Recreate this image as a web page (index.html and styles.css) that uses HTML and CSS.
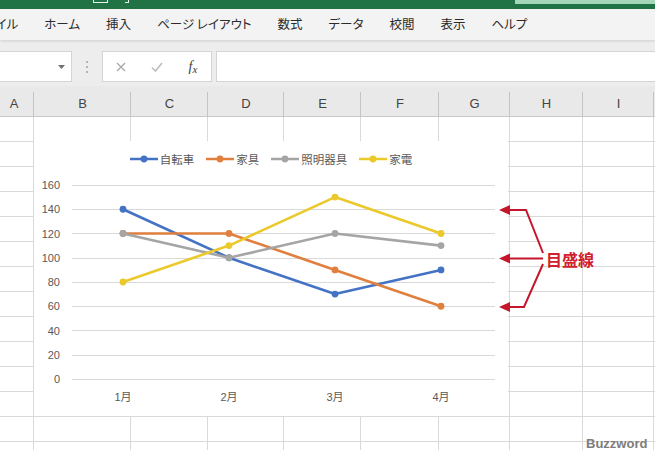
FILE: index.html
```html
<!DOCTYPE html>
<html lang="ja">
<head>
<meta charset="utf-8">
<title>Excel 目盛線</title>
<link rel="stylesheet" href="styles.css">
</head>
<body>
<div class="app">
  <div class="titlebar">
    <span class="qa qa-save"></span>
    <span class="qa qa-undo"></span>
    <span class="search"></span>
  </div>

  <nav class="menubar">
    <span class="menu-first">ファイル</span>
    <span>ホーム</span>
    <span>挿入</span>
    <span>ページ レイアウト</span>
    <span>数式</span>
    <span>データ</span>
    <span>校閲</span>
    <span>表示</span>
    <span>ヘルプ</span>
  </nav>

  <div class="formulabar">
    <div class="namebox">
      <svg class="dd" width="7" height="4" viewBox="0 0 7 4"><path d="M0 0H7L3.5 4Z"/></svg>
    </div>
    <div class="grip">
      <svg width="2" height="12" viewBox="0 0 2 12"><rect x="0" y="0" width="2" height="2"/><rect x="0" y="5" width="2" height="2"/><rect x="0" y="10" width="2" height="2"/></svg>
    </div>
    <div class="fbtns">
      <span class="fbtn"><svg width="10" height="10" viewBox="0 0 10 10"><path d="M1 1L9 9M9 1L1 9" class="xs"/></svg></span>
      <span class="fbtn"><svg width="12" height="10" viewBox="0 0 12 10"><path d="M1 5.5L4.5 9L11 1" class="ck"/></svg></span>
      <span class="fbtn fx"><i>f</i><i class="fxx">x</i></span>
    </div>
    <div class="finput"></div>
  </div>

  <div class="colheads">
    <div class="ch c-a">A</div>
    <div class="ch c-b">B</div>
    <div class="ch c-c">C</div>
    <div class="ch c-d">D</div>
    <div class="ch c-e">E</div>
    <div class="ch c-f">F</div>
    <div class="ch c-g">G</div>
    <div class="ch c-h">H</div>
    <div class="ch c-i">I</div>
    <div class="ch c-j"></div>
  </div>

  <div class="sheet">
    <div class="col c-a"></div>
    <div class="col c-b"></div>
    <div class="col c-c"></div>
    <div class="col c-d"></div>
    <div class="col c-e"></div>
    <div class="col c-f"></div>
    <div class="col c-g"></div>
    <div class="col c-h"></div>
    <div class="col c-i"></div>
    <div class="col c-j"></div>
  </div>

  <div class="chart">
    <svg class="plot" width="474" height="275" viewBox="34 141 474 275">
      <g class="grid">
        <line x1="72" x2="495" y1="185.5" y2="185.5"/>
        <line x1="72" x2="495" y1="209.5" y2="209.5"/>
        <line x1="72" x2="495" y1="233.5" y2="233.5"/>
        <line x1="72" x2="495" y1="258.5" y2="258.5"/>
        <line x1="72" x2="495" y1="282.5" y2="282.5"/>
        <line x1="72" x2="495" y1="306.5" y2="306.5"/>
        <line x1="72" x2="495" y1="330.5" y2="330.5"/>
        <line x1="72" x2="495" y1="355.5" y2="355.5"/>
        <line x1="72" x2="495" y1="379.5" y2="379.5"/>
      </g>
      <g class="ylab">
        <text x="60" y="185">160</text>
        <text x="60" y="209">140</text>
        <text x="60" y="234">120</text>
        <text x="60" y="258">100</text>
        <text x="60" y="282">80</text>
        <text x="60" y="306">60</text>
        <text x="60" y="331">40</text>
        <text x="60" y="355">20</text>
        <text x="60" y="379">0</text>
      </g>
      <g class="xlab">
        <text x="123" y="397">1月</text>
        <text x="229" y="397">2月</text>
        <text x="335" y="397">3月</text>
        <text x="441" y="397">4月</text>
      </g>
      <g class="s s1">
        <polyline points="123,209.25 229,257.75 335,294.1 441,269.9"/>
        <circle cx="123" cy="209.25" r="3.4"/><circle cx="229" cy="257.75" r="3.4"/><circle cx="335" cy="294.1" r="3.4"/><circle cx="441" cy="269.9" r="3.4"/>
      </g>
      <g class="s s2">
        <polyline points="123,233.5 229,233.5 335,269.9 441,306.25"/>
        <circle cx="123" cy="233.5" r="3.4"/><circle cx="229" cy="233.5" r="3.4"/><circle cx="335" cy="269.9" r="3.4"/><circle cx="441" cy="306.25" r="3.4"/>
      </g>
      <g class="s s3">
        <polyline points="123,233.5 229,257.75 335,233.5 441,245.6"/>
        <circle cx="123" cy="233.5" r="3.4"/><circle cx="229" cy="257.75" r="3.4"/><circle cx="335" cy="233.5" r="3.4"/><circle cx="441" cy="245.6" r="3.4"/>
      </g>
      <g class="s s4">
        <polyline points="123,282 229,245.6 335,197.1 441,233.5"/>
        <circle cx="123" cy="282" r="3.4"/><circle cx="229" cy="245.6" r="3.4"/><circle cx="335" cy="197.1" r="3.4"/><circle cx="441" cy="233.5" r="3.4"/>
      </g>
    </svg>

    <div class="legend">
      <div class="lg-item">
        <svg class="sw s1" width="28" height="8" viewBox="0 0 28 8"><line x1="0" x2="28" y1="4" y2="4"/><circle cx="14" cy="4" r="3.4"/></svg>
        <span>自転車</span>
      </div>
      <div class="lg-item">
        <svg class="sw s2" width="28" height="8" viewBox="0 0 28 8"><line x1="0" x2="28" y1="4" y2="4"/><circle cx="14" cy="4" r="3.4"/></svg>
        <span>家具</span>
      </div>
      <div class="lg-item">
        <svg class="sw s3" width="28" height="8" viewBox="0 0 28 8"><line x1="0" x2="28" y1="4" y2="4"/><circle cx="14" cy="4" r="3.4"/></svg>
        <span>照明器具</span>
      </div>
      <div class="lg-item">
        <svg class="sw s4" width="28" height="8" viewBox="0 0 28 8"><line x1="0" x2="28" y1="4" y2="4"/><circle cx="14" cy="4" r="3.4"/></svg>
        <span>家電</span>
      </div>
    </div>
  </div>

  <svg class="callout" width="655" height="450" viewBox="0 0 655 450">
    <path d="M509 210H526L543 253"/>
    <path d="M509 258.5H543"/>
    <path d="M509 307H524L543 264"/>
    <polygon points="499,210 510,205 510,215"/>
    <polygon points="499,258.5 510,253.5 510,263.5"/>
    <polygon points="499,307 510,302 510,312"/>
  </svg>
  <div class="callout-label">目盛線</div>

  <div class="watermark">Buzzword</div>
</div>
</body>
</html>
```

FILE: styles.css
```css
* { box-sizing: border-box; }

html, body {
  margin: 0;
  padding: 0;
}

body {
  width: 655px;
  height: 450px;
  overflow: hidden;
  background: #ffffff;
  font-family: "Noto Sans CJK JP", "Liberation Sans", sans-serif;
}

.app {
  position: relative;
  width: 655px;
  height: 450px;
  overflow: hidden;
}

/* ---------- title bar ---------- */
.titlebar {
  height: 9px;
  background: #217346;
  display: flex;
  align-items: flex-start;
}

.qa {
  display: block;
  flex-shrink: 0;
  height: 3px;
  border: 1px solid #e8f2ec;
  border-top: none;
}

.qa-save {
  width: 15px;
  margin-left: 93px;
}

.qa-undo {
  width: 4px;
  margin-left: 17px;
  border-left: none;
}

.search {
  display: block;
  flex-shrink: 0;
  width: 140px;
  height: 4px;
  margin-left: auto;
  background: #a6d6b8;
}

/* ---------- menu ---------- */
.menubar {
  height: 31px;
  background: #f3f3f3;
  display: flex;
  align-items: center;
  gap: 26px;
  font-size: 12.5px;
  line-height: 1;
  color: #2b2b2b;
  font-feature-settings: "palt";
  white-space: nowrap;
  position: relative;
  z-index: 2;
  box-shadow: 0 1px 3px rgba(0, 0, 0, 0.13);
}

.menubar span { flex-shrink: 0; }

.menu-first {
  margin-left: -25px;
}

/* ---------- formula bar ---------- */
.formulabar {
  height: 46px;
  background: #ededed;
  display: flex;
  align-items: flex-start;
  padding-top: 11px;
}

.formulabar > div { flex-shrink: 0; }

.namebox {
  width: 73px;
  height: 31px;
  margin-left: -1px;
  background: #ffffff;
  border: 1px solid #d5d5d5;
  display: flex;
  align-items: center;
  justify-content: flex-end;
  padding-right: 6px;
}

.dd path { fill: #707070; }

.grip {
  width: 30px;
  height: 31px;
  display: flex;
  align-items: center;
  justify-content: center;
}

.grip rect { fill: #b5b5b5; }

.fbtns {
  width: 110px;
  height: 31px;
  background: #ffffff;
  border: 1px solid #d5d5d5;
  display: flex;
  align-items: center;
}

.fbtn {
  flex: 0 0 36px;
  height: 29px;
  display: flex;
  align-items: center;
  justify-content: center;
}

.xs { stroke: #a8a8a8; stroke-width: 1.3; fill: none; }
.ck { stroke: #bdbdbd; stroke-width: 1.6; fill: none; }

.fx {
  font-family: "Liberation Serif", serif;
  font-size: 14px;
  color: #3c3c3c;
}

.fxx {
  font-size: 11px;
  position: relative;
  top: 2px;
}

.finput {
  width: 460px;
  height: 31px;
  margin-left: 4px;
  background: #ffffff;
  border: 1px solid #d5d5d5;
}

/* ---------- columns ---------- */
.c-a { flex: 0 0 40px; margin-left: -6px; }
.c-b { flex: 0 0 97px; }
.c-c { flex: 0 0 77px; }
.c-d { flex: 0 0 76px; }
.c-e { flex: 0 0 77px; }
.c-f { flex: 0 0 78px; }
.c-g { flex: 0 0 71px; }
.c-h { flex: 0 0 73px; }
.c-i { flex: 0 0 71px; }
.c-j { flex: 0 0 40px; }

.colheads {
  height: 31px;
  display: flex;
  background: #e9e9e9;
  border-bottom: 1px solid #c8c8c8;
}

.ch {
  display: flex;
  align-items: center;
  justify-content: center;
  padding-top: 5px;
  font-family: "Liberation Sans", sans-serif;
  font-size: 13px;
  color: #444444;
  background: linear-gradient(#c4c4c4, #c4c4c4) no-repeat right bottom / 1px 24px;
}

.sheet {
  height: 333px;
  display: flex;
}

.col {
  height: 100%;
  border-right: 1px solid #d9d9d9;
  background: repeating-linear-gradient(to bottom, transparent 0 24px, #d9d9d9 24px 25px);
}

/* ---------- chart ---------- */
.chart {
  position: absolute;
  left: 34px;
  top: 141px;
  width: 474px;
  height: 275px;
  background: #ffffff;
}

.plot {
  position: absolute;
  left: 0;
  top: 0;
}

.grid line {
  stroke: #d9d9d9;
  stroke-width: 1;
}

.ylab text,
.xlab text {
  font-family: "Liberation Sans", "Noto Sans CJK JP", sans-serif;
  font-size: 11px;
  fill: #595959;
  dominant-baseline: central;
}

.ylab text { text-anchor: end; }
.xlab text { text-anchor: middle; }

.s polyline,
.sw line {
  fill: none;
  stroke-width: 2.6;
  stroke-linejoin: round;
  stroke-linecap: round;
}

.s1 polyline, .s1 line { stroke: #4472c4; }
.s1 circle { fill: #4472c4; }
.s2 polyline, .s2 line { stroke: #e07f3e; }
.s2 circle { fill: #e07f3e; }
.s3 polyline, .s3 line { stroke: #a5a5a5; }
.s3 circle { fill: #a5a5a5; }
.s4 polyline, .s4 line { stroke: #ecc92b; }
.s4 circle { fill: #ecc92b; }

.legend {
  position: relative;
  display: flex;
  justify-content: center;
  gap: 12px;
  padding-top: 11px;
  font-size: 11.5px;
  line-height: 14px;
  color: #595959;
}

.lg-item {
  display: flex;
  align-items: center;
  gap: 2px;
}

.sw { display: block; }

/* ---------- callout ---------- */
.callout {
  position: absolute;
  left: 0;
  top: 0;
  pointer-events: none;
}

.callout path {
  fill: none;
  stroke: #c4172c;
  stroke-width: 2;
}

.callout polygon {
  fill: #c4172c;
}

.callout-label {
  position: absolute;
  left: 546px;
  top: 249px;
  font-size: 16px;
  line-height: 20px;
  font-weight: bold;
  color: #d0202c;
}

.watermark {
  position: absolute;
  left: 586px;
  top: 436px;
  font-family: "Liberation Sans", sans-serif;
  font-size: 13px;
  font-weight: bold;
  line-height: 16px;
  color: #7d7d7d;
}
```
